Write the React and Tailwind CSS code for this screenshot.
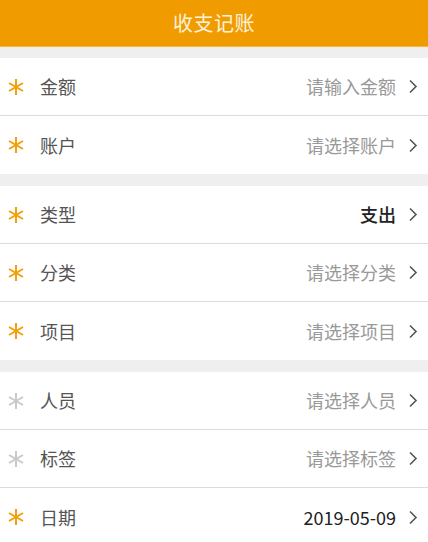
import React from "react";

const FONT = { fontFamily: '"Noto Sans CJK SC", "Noto Sans", sans-serif' };

function Star({ on }) {
  const c = on ? "#f2a007" : "#c9c9c9";
  return (
    <svg width="18" height="18" viewBox="0 0 18 18" className="shrink-0">
      <g stroke={c} strokeWidth="2" strokeLinecap="butt">
        <line x1="9" y1="1" x2="9" y2="17" />
        <line x1="2" y1="5" x2="16" y2="13" />
        <line x1="2" y1="13" x2="16" y2="5" />
      </g>
    </svg>
  );
}

function Chevron() {
  return (
    <svg width="10" height="15" viewBox="0 0 10 15" className="shrink-0">
      <polyline points="2,1.5 8,7.5 2,13.5" fill="none" stroke="#555" strokeWidth="1.6" />
    </svg>
  );
}

function Row({ on, label, value, kind, last }) {
  const valueCls =
    kind === "bold"
      ? "text-[#222] font-medium"
      : kind === "dark"
      ? "text-[#222]"
      : "text-[#999]";
  return (
    <div
      className={
        "h-[58px] flex items-center pl-[7px] pr-[10px] bg-white " +
        (last ? "" : "border-b border-[#dcdcdc]")
      }
    >
      <Star on={on} />
      <span className="ml-[15px] text-[18px] text-[#555]">{label}</span>
      <span className={"ml-auto text-[18px] " + valueCls}>{value}</span>
      <span className="ml-[12px] flex items-center">
        <Chevron />
      </span>
    </div>
  );
}

export default function App() {
  const groups = [
    [
      { on: true, label: "金额", value: "请输入金额" },
      { on: true, label: "账户", value: "请选择账户" },
    ],
    [
      { on: true, label: "类型", value: "支出", kind: "bold" },
      { on: true, label: "分类", value: "请选择分类" },
      { on: true, label: "项目", value: "请选择项目" },
    ],
    [
      { on: false, label: "人员", value: "请选择人员" },
      { on: false, label: "标签", value: "请选择标签" },
      { on: true, label: "日期", value: "2019-05-09", kind: "dark" },
    ],
  ];
  return (
    <div className="w-[428px] h-[542px] overflow-hidden bg-[#efefef]" style={FONT}>
      <div className="h-[47px] bg-[#f09c00] flex items-center justify-center border-b border-[#f5b740]">
        <span className="text-[20px] text-[#fdf1dc] tracking-[0.5px]">收支记账</span>
      </div>
      <div className="flex flex-col gap-[12px] pt-[11px]">
        {groups.map((g, gi) => (
          <div key={gi} className="flex flex-col">
            {g.map((r, ri) => (
              <Row key={ri} {...r} last={ri === g.length - 1} />
            ))}
          </div>
        ))}
      </div>
    </div>
  );
}
